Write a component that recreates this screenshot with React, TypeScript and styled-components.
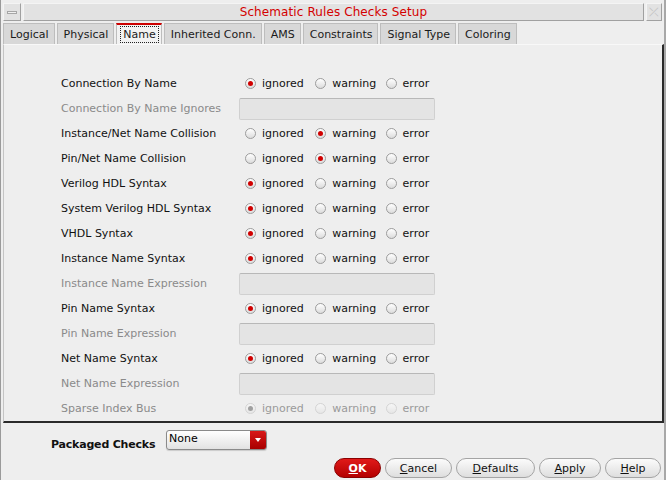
import React from "react";
import styled, { createGlobalStyle, css } from "styled-components";

const Global = createGlobalStyle`
  html, body { margin: 0; padding: 0; background: #ececec; }
  body { font-family: "DejaVu Sans", "Liberation Sans", sans-serif; font-size: 11px; }
`;

const Window = styled.div`
  width: 666px;
  height: 480px;
  box-sizing: border-box;
  display: flex;
  flex-direction: column;
  background: #eeeeee;
  border-left: 1px solid #9a9a9a;
  border-right: 2px solid #a8a8a8;
  overflow: hidden;
`;

const TitleBar = styled.div`
  display: flex;
  align-items: stretch;
  gap: 2px;
  height: 18px;
  padding: 3px 2px 2px 2px;
`;

const TitleBox = styled.div`
  box-sizing: border-box;
  border: 1px solid #b8b8b8;
  border-color: #f4f4f4 #a0a0a0 #a0a0a0 #f4f4f4;
  background: #e2e2e2;
  display: flex;
  align-items: center;
  justify-content: center;
`;

const MinBtn = styled(TitleBox)`
  width: 18px;
  &::after {
    content: "";
    width: 10px;
    height: 3px;
    border: 1px solid #a6a6a6;
    background: #f0f0f0;
    box-sizing: border-box;
  }
`;

const TitleText = styled(TitleBox)`
  flex: 1;
  color: #d40000;
  font-size: 12px;
  letter-spacing: 0.1px;
`;

const CloseBtn = styled(TitleBox)`
  width: 16px;
  color: #c0c0c0;
  font-size: 12px;
`;

const TabRow = styled.div`
  display: flex;
  height: 21px;
  margin-left: 2px;
  gap: 2px;
`;

const Tab = styled.div<{ $active?: boolean }>`
  box-sizing: border-box;
  padding: 1px 5px 0 6px;
  display: flex;
  align-items: center;
  color: #1a1a1a;
  background: #d8d8d8;
  border: 1px solid #bdbdbd;
  border-bottom: none;
  ${(p) =>
    p.$active &&
    css`
      background: #f2f2f2;
      border-top: 2px solid #cc0000;
      padding: 0 2px 0 3px;
    `}
`;

const Focus = styled.span`
  border: 1px dotted #222;
  padding: 1px 2px;
`;

const Panel = styled.div`
  margin-left: 2px;
  height: 379px;
  box-sizing: border-box;
  border-left: 1px solid #c4c4c4;
  border-right: 2px solid #2a2a2a;
  border-bottom: 2px solid #2a2a2a;
  border-top: 1px solid #f8f8f8;
  padding: 26px 0 0 57px;
  display: grid;
  grid-template-columns: 178px 196px;
  grid-auto-rows: 25px;
  align-content: start;
  width: 661px;
`;

const Label = styled.div<{ $dim?: boolean }>`
  display: flex;
  align-items: center;
  color: ${(p) => (p.$dim ? "#8a8a8a" : "#111")};
`;

const Field = styled.div`
  align-self: center;
  height: 22px;
  box-sizing: border-box;
  border: 1px solid #d0d0d0;
  border-top-color: #b8b8b8;
  border-radius: 2px;
  background: #e4e4e4;
`;

const RadioGroup = styled.div`
  display: flex;
  align-items: center;
  padding-left: 6px;
`;

const Option = styled.label<{ $dim?: boolean; $w?: number }>`
  display: flex;
  align-items: center;
  gap: 6px;
  width: ${(p) => p.$w ?? 71}px;
  color: ${(p) => (p.$dim ? "#9a9a9a" : "#111")};
`;

const Dot = styled.span<{ $on?: boolean; $dim?: boolean }>`
  box-sizing: border-box;
  width: 11px;
  height: 11px;
  border-radius: 50%;
  border: 1px solid ${(p) => (p.$dim ? "#d4d4d4" : "#9c9c9c")};
  background: ${(p) =>
    p.$dim
      ? "linear-gradient(#f6f6f6, #e6e6e6)"
      : "linear-gradient(#ffffff, #dcdcdc)"};
  display: flex;
  align-items: center;
  justify-content: center;
  &::after {
    content: "";
    display: ${(p) => (p.$on ? "block" : "none")};
    width: 5px;
    height: 5px;
    border-radius: 50%;
    background: ${(p) => (p.$dim ? "#a0a0a0" : "#d00000")};
  }
`;

const Bottom = styled.div`
  flex: 1;
  display: flex;
  flex-direction: column;
  padding: 7px 3px 0 0;
`;

const PackRow = styled.div`
  display: flex;
  align-items: flex-start;
  height: 20px;
  padding-left: 50px;
`;

const BoldLabel = styled.div`
  width: 115px;
  padding-top: 8px;
  font-weight: bold;
  color: #111;
  font-size: 11px;
  letter-spacing: -0.2px;
`;

const Select = styled.div`
  width: 101px;
  height: 20px;
  box-sizing: border-box;
  border: 1px solid #8a8a8a;
  border-radius: 3px;
  display: flex;
  overflow: hidden;
  background: linear-gradient(#ffffff, #e2e2e2);
  box-shadow: 0 1px 1px rgba(0, 0, 0, 0.15);
`;

const SelectText = styled.div`
  flex: 1;
  padding-left: 2px;
  line-height: 16px;
  color: #000;
`;

const SelectArrow = styled.div`
  width: 16px;
  background: linear-gradient(#d81818, #a80000);
  display: flex;
  align-items: center;
  justify-content: center;
  &::after {
    content: "";
    border-left: 3.5px solid transparent;
    border-right: 3.5px solid transparent;
    border-top: 4px solid #fff;
  }
`;

const ButtonRow = styled.div`
  display: flex;
  justify-content: flex-end;
  gap: 4px;
  margin-top: 8px;
`;

const Button = styled.div<{ $primary?: boolean; $w: number }>`
  width: ${(p) => p.$w}px;
  height: 20px;
  box-sizing: border-box;
  border-radius: 10px;
  display: flex;
  align-items: center;
  justify-content: center;
  border: 1px solid ${(p) => (p.$primary ? "#8a0000" : "#a4a4a4")};
  background: ${(p) =>
    p.$primary
      ? "linear-gradient(#e01a1a, #b40000)"
      : "linear-gradient(#fbfbfb, #dedede)"};
  color: ${(p) => (p.$primary ? "#fff" : "#111")};
  font-weight: ${(p) => (p.$primary ? "bold" : "normal")};
`;

const U = styled.span`
  text-decoration: underline;
`;

type Row =
  | { kind: "radio"; label: string; sel: number; dim?: boolean }
  | { kind: "field"; label: string };

const rows: Row[] = [
  { kind: "radio", label: "Connection By Name", sel: 0 },
  { kind: "field", label: "Connection By Name Ignores" },
  { kind: "radio", label: "Instance/Net Name Collision", sel: 1 },
  { kind: "radio", label: "Pin/Net Name Collision", sel: 1 },
  { kind: "radio", label: "Verilog HDL Syntax", sel: 0 },
  { kind: "radio", label: "System Verilog HDL Syntax", sel: 0 },
  { kind: "radio", label: "VHDL Syntax", sel: 0 },
  { kind: "radio", label: "Instance Name Syntax", sel: 0 },
  { kind: "field", label: "Instance Name Expression" },
  { kind: "radio", label: "Pin Name Syntax", sel: 0 },
  { kind: "field", label: "Pin Name Expression" },
  { kind: "radio", label: "Net Name Syntax", sel: 0 },
  { kind: "field", label: "Net Name Expression" },
  { kind: "radio", label: "Sparse Index Bus", sel: 0, dim: true },
];

const tabs = [
  "Logical",
  "Physical",
  "Name",
  "Inherited Conn.",
  "AMS",
  "Constraints",
  "Signal Type",
  "Coloring",
];

const opts = ["ignored", "warning", "error"];

export default function App() {
  return (
    <>
      <Global />
      <Window>
        <TitleBar>
          <MinBtn />
          <TitleText>Schematic Rules Checks Setup</TitleText>
          <CloseBtn>⤫</CloseBtn>
        </TitleBar>
        <TabRow>
          {tabs.map((t) =>
            t === "Name" ? (
              <Tab key={t} $active>
                <Focus>{t}</Focus>
              </Tab>
            ) : (
              <Tab key={t}>{t}</Tab>
            )
          )}
        </TabRow>
        <Panel>
          {rows.map((r) => (
            <React.Fragment key={r.label}>
              <Label $dim={r.kind === "field" || (r.kind === "radio" && r.dim)}>
                {r.label}
              </Label>
              {r.kind === "field" ? (
                <Field />
              ) : (
                <RadioGroup>
                  {opts.map((o, i) => (
                    <Option key={o} $dim={r.dim} $w={i === 2 ? 50 : 71}>
                      <Dot $on={r.sel === i} $dim={r.dim} />
                      {o}
                    </Option>
                  ))}
                </RadioGroup>
              )}
            </React.Fragment>
          ))}
        </Panel>
        <Bottom>
          <PackRow>
            <BoldLabel>Packaged Checks</BoldLabel>
            <Select>
              <SelectText>None</SelectText>
              <SelectArrow />
            </Select>
          </PackRow>
          <ButtonRow>
            <Button $primary $w={47}>
              <U>O</U>K
            </Button>
            <Button $w={67}>
              <U>C</U>ancel
            </Button>
            <Button $w={79}>
              <U>D</U>efaults
            </Button>
            <Button $w={62}>
              <U>A</U>pply
            </Button>
            <Button $w={56}>
              <U>H</U>elp
            </Button>
          </ButtonRow>
        </Bottom>
      </Window>
    </>
  );
}
